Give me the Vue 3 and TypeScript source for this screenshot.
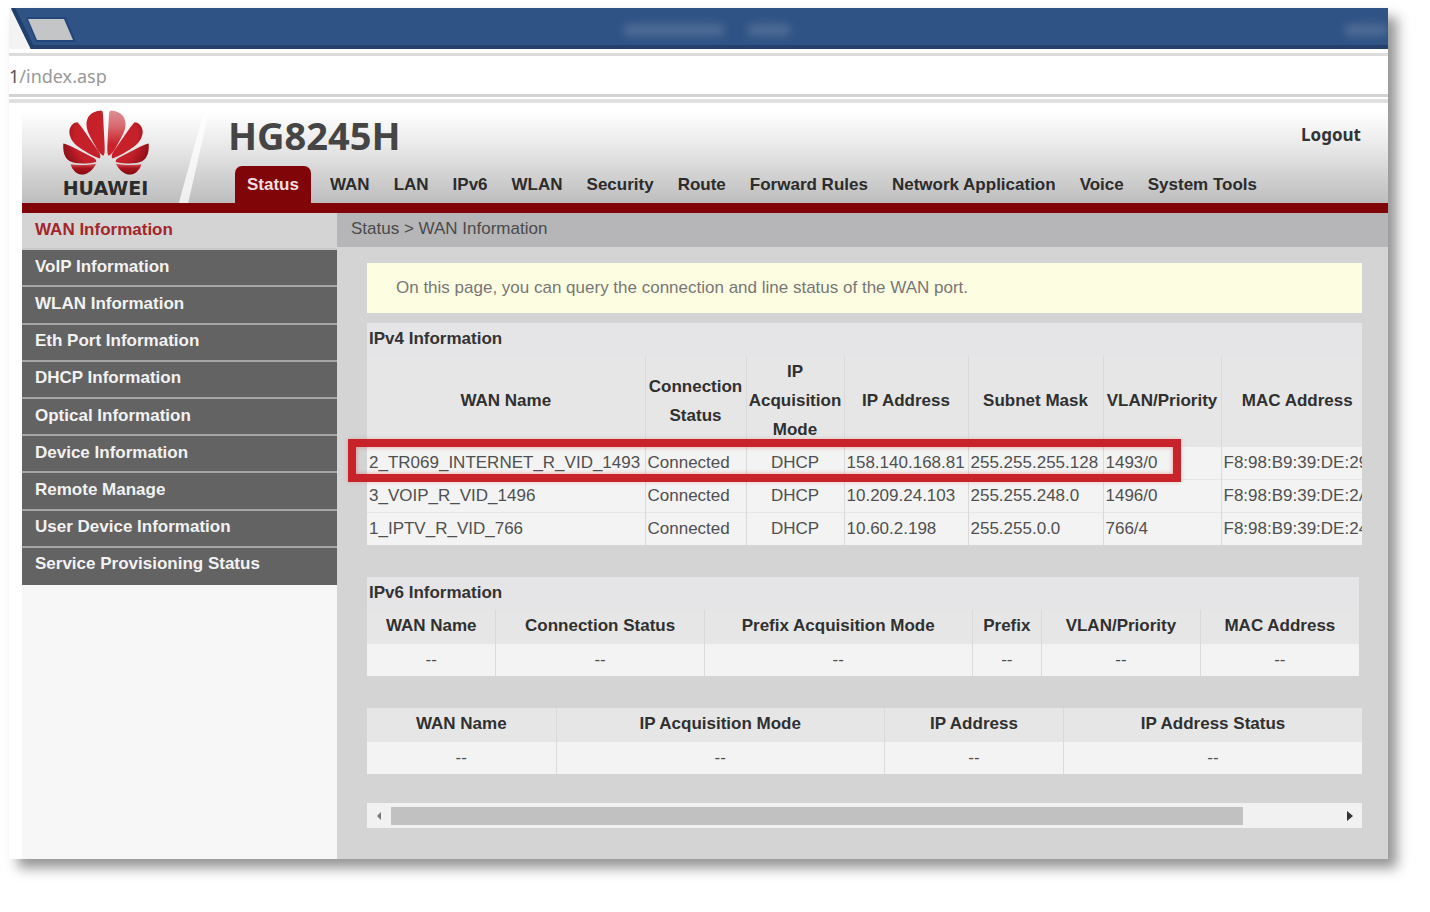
<script setup lang="ts">
import { ref } from 'vue'

interface WanRow {
  name: string
  status: string
  mode: string
  ip: string
  mask: string
  vlan: string
  mac: string
}

const navItems: string[] = [
  'Status', 'WAN', 'LAN', 'IPv6', 'WLAN', 'Security', 'Route',
  'Forward Rules', 'Network Application', 'Voice', 'System Tools',
]

const sideItems: string[] = [
  'WAN Information', 'VoIP Information', 'WLAN Information', 'Eth Port Information',
  'DHCP Information', 'Optical Information', 'Device Information', 'Remote Manage',
  'User Device Information', 'Service Provisioning Status',
]

const activeNav = ref('Status')
const activeSide = ref('WAN Information')
const path = ref('/index.asp')

const ipv4Heads: string[] = [
  'WAN Name', 'Connection Status', 'IP Acquisition Mode', 'IP Address',
  'Subnet Mask', 'VLAN/Priority', 'MAC Address',
]

const wanRows: WanRow[] = [
  { name: '2_TR069_INTERNET_R_VID_1493', status: 'Connected', mode: 'DHCP', ip: '158.140.168.81', mask: '255.255.255.128', vlan: '1493/0', mac: 'F8:98:B9:39:DE:29' },
  { name: '3_VOIP_R_VID_1496', status: 'Connected', mode: 'DHCP', ip: '10.209.24.103', mask: '255.255.248.0', vlan: '1496/0', mac: 'F8:98:B9:39:DE:2A' },
  { name: '1_IPTV_R_VID_766', status: 'Connected', mode: 'DHCP', ip: '10.60.2.198', mask: '255.255.0.0', vlan: '766/4', mac: 'F8:98:B9:39:DE:24' },
]

const ipv6Heads: string[] = [
  'WAN Name', 'Connection Status', 'Prefix Acquisition Mode', 'Prefix', 'VLAN/Priority', 'MAC Address',
]
const addressHeads: string[] = ['WAN Name', 'IP Acquisition Mode', 'IP Address', 'IP Address Status']
</script>

<template>
  <div class="stage">
    <div class="window">
      <div class="titlebar">
        <svg class="tab" viewBox="0 0 80 41" aria-hidden="true">
          <polygon points="0,0 2,0 22,41 0,41" fill="#f3f3f3" />
          <path d="M4 0L24 41" stroke="#223f6b" stroke-width="4" fill="none" />
          <polygon points="17,9 57,9 67,34 27,34" fill="#25467a" />
          <polygon points="19,11 55,11 64,32 28,32" fill="#c4c5c7" />
        </svg>
        <span class="smear smear-a"></span>
        <span class="smear smear-b"></span>
        <span class="smear smear-c"></span>
      </div>

      <div class="addressbar">
        <label for="url">1</label>
        <input id="url" v-model="path" type="text" spellcheck="false" />
      </div>

      <div class="page">
        <header class="header">
          <div class="brand">
            <svg class="slash" viewBox="0 0 40 100" preserveAspectRatio="none" aria-hidden="true">
              <polygon points="30,0 36,0 12,100 1,100" fill="#fff" opacity="0.75" />
            </svg>
            <svg class="flower" viewBox="186 326 266 202" aria-hidden="true">
              <defs>
                <radialGradient id="petal" gradientUnits="userSpaceOnUse" cx="319" cy="410" r="135">
                  <stop offset="0" stop-color="#c9222b" />
                  <stop offset="0.7" stop-color="#c4202a" />
                  <stop offset="1" stop-color="#8f1019" />
                </radialGradient>
                <linearGradient id="pale" x1="0" y1="0" x2="0" y2="1">
                  <stop offset="0" stop-color="#dd9195" />
                  <stop offset="0.35" stop-color="#d9686e" />
                  <stop offset="0.75" stop-color="#c9222b" />
                </linearGradient>
                <linearGradient id="low" x1="0" y1="0" x2="0" y2="1">
                  <stop offset="0" stop-color="#e0555b" />
                  <stop offset="0.4" stop-color="#a8141e" />
                  <stop offset="1" stop-color="#85080f" />
                </linearGradient>
              </defs>
              <g fill="url(#petal)">
                <path d="M311 467C304 465 294 452 286 436C272 411 259 390 260 370C261 350 272 332 305 330Q310 332 310 342L315 440Q316 462 311 467Z" />
                <path d="M300 475C280 469 248 450 230 436C212 421 206 402 209 388C212 376 221 366 233 366L246 382L299 458Q304 470 300 475Z" />
                <path d="M289 486C262 492 228 493 210 484C194 475 188 455 190 430C200 431 214 439 228 446L282 474Q292 480 289 486Z" />
                <path d="M338 475C358 469 390 450 408 436C426 421 432 402 429 388C426 376 417 366 405 366L392 382L339 458Q334 470 338 475Z" />
                <path d="M349 486C376 492 410 493 428 484C444 475 450 455 448 430C438 431 424 439 410 446L356 474Q346 480 349 486Z" />
              </g>
              <path d="M327 467C334 465 344 452 352 436C366 411 379 390 378 370C377 350 366 332 333 330Q328 332 328 342L323 440Q322 462 327 467Z" fill="url(#pale)" />
              <path d="M289 491C281 507 266 524 245 524C228 523 216 508 212 493C236 497 268 495 289 491Z" fill="url(#low)" />
              <path d="M349 491C357 507 372 524 393 524C410 523 422 508 426 493C402 497 370 495 349 491Z" fill="url(#low)" />
            </svg>
            <span class="brand-name">HUAWEI</span>
          </div>
          <div class="head-main">
            <div class="head-top">
              <h1>HG8245H</h1>
              <a href="#logout" class="logout">Logout</a>
            </div>
            <nav class="nav">
              <a
                v-for="item in navItems"
                :key="item"
                href="#"
                :class="{ active: item === activeNav }"
                @click.prevent="activeNav = item"
              >{{ item }}</a>
            </nav>
          </div>
        </header>

        <div class="columns">
          <aside class="side">
            <nav class="side-list">
              <a
                v-for="item in sideItems"
                :key="item"
                href="#"
                :class="{ active: item === activeSide }"
                @click.prevent="activeSide = item"
              >{{ item }}</a>
            </nav>
          </aside>

          <main class="main">
            <div class="crumb">Status &gt; WAN Information</div>
            <div class="content">
              <p class="notice">On this page, you can query the connection and line status of the WAN port.</p>

              <section class="block">
                <div class="clip">
                  <table class="wan">
                    <caption>IPv4 Information</caption>
                    <colgroup>
                      <col class="w-name" /><col class="w-status" /><col class="w-mode" /><col class="w-ip" />
                      <col class="w-mask" /><col class="w-vlan" /><col class="w-mac" />
                    </colgroup>
                    <thead>
                      <tr><th v-for="h in ipv4Heads" :key="h" scope="col">{{ h }}</th></tr>
                    </thead>
                    <tbody>
                      <tr v-for="r in wanRows" :key="r.name">
                        <td>{{ r.name }}</td>
                        <td>{{ r.status }}</td>
                        <td class="center">{{ r.mode }}</td>
                        <td>{{ r.ip }}</td>
                        <td>{{ r.mask }}</td>
                        <td>{{ r.vlan }}</td>
                        <td>{{ r.mac }}</td>
                      </tr>
                    </tbody>
                  </table>
                </div>
                <div class="marker"></div>
              </section>

              <section class="block">
                <table class="prefix">
                  <caption>IPv6 Information</caption>
                  <colgroup>
                    <col class="p-name" /><col class="p-status" /><col class="p-mode" />
                    <col class="p-prefix" /><col class="p-vlan" /><col class="p-mac" />
                  </colgroup>
                  <thead>
                    <tr><th v-for="h in ipv6Heads" :key="h" scope="col">{{ h }}</th></tr>
                  </thead>
                  <tbody>
                    <tr><td v-for="h in ipv6Heads" :key="h" class="center">--</td></tr>
                  </tbody>
                </table>
              </section>

              <section class="block">
                <table>
                  <colgroup>
                    <col class="a-name" /><col class="a-mode" /><col class="a-ip" /><col class="a-status" />
                  </colgroup>
                  <thead>
                    <tr><th v-for="h in addressHeads" :key="h" scope="col">{{ h }}</th></tr>
                  </thead>
                  <tbody>
                    <tr><td v-for="h in addressHeads" :key="h" class="center">--</td></tr>
                  </tbody>
                </table>
              </section>

              <div class="scroll">
                <button type="button" aria-label="Scroll left">
                  <svg viewBox="0 0 6 10"><path d="M5 1L1 5L5 9Z" fill="#777" /></svg>
                </button>
                <div class="track"><div class="thumb"></div></div>
                <button type="button" aria-label="Scroll right">
                  <svg viewBox="0 0 6 10"><path d="M0 0L6 5L0 10Z" fill="#333" /></svg>
                </button>
              </div>
            </div>
          </main>
        </div>
      </div>
    </div>
  </div>
</template>

<style>
body {
  background: #fff;
}
</style>

<style scoped>
.stage {
  box-sizing: border-box;
  min-height: 100vh;
  padding: 8px 42px 53px 9px;
  display: flex;
  overflow: hidden;
  font: 17px/20px "Liberation Sans", Arial, sans-serif;
  color: #505050;
}
.window {
  flex: 1;
  min-width: 0;
  display: flex;
  flex-direction: column;
  background: #fff;
  box-shadow: 9px 9px 12px rgba(0, 0, 0, 0.42);
}
a {
  color: inherit;
  text-decoration: none;
}

.titlebar {
  position: relative;
  height: 41px;
  background: linear-gradient(#2f5385 90%, #25406c 90%);
  overflow: hidden;
}
.tab {
  position: absolute;
  left: 0;
  top: 0;
  width: 80px;
  height: 41px;
}
.smear {
  position: absolute;
  top: 16px;
  height: 12px;
  background: #4f6c96;
  border-radius: 6px;
  filter: blur(4px);
}
.smear-a {
  left: 44.5%;
  width: 102px;
}
.smear-b {
  left: 53.5%;
  width: 44px;
}
.smear-c {
  right: 0;
  width: 44px;
}

.addressbar {
  display: flex;
  align-items: center;
  height: 38px;
  margin-top: 4px;
  border-top: 3px solid #dcdcdc;
  border-bottom: 3px solid #d3d3d3;
  font-family: "Noto Sans", "Open Sans", sans-serif;
  font-size: 18px;
}
.addressbar label {
  color: #555;
}
.addressbar input {
  flex: 1;
  min-width: 0;
  border: 0;
  padding: 2px 0 0;
  outline: 0;
  background: transparent;
  font: inherit;
  color: #999;
}
.addressbar label {
  padding-top: 2px;
}

.page {
  flex: 1;
  display: flex;
  flex-direction: column;
  margin-top: 2px;
  padding-left: 13px;
  border-top: 4px solid #e0e0e0;
}
.header {
  display: flex;
  height: 100px;
  border-bottom: 10px solid #7f0508;
  background: linear-gradient(#fff 8%, #eaeaea 42%, #d2d2d2 72%, #bdbdbd);
}
.brand {
  position: relative;
  width: 206px;
  display: flex;
  flex-direction: column;
  align-items: center;
  box-sizing: border-box;
  padding: 6px 39px 0 0;
}
.slash {
  position: absolute;
  right: 16px;
  top: 10px;
  width: 34px;
  height: 90px;
}
.flower {
  width: 88px;
  height: 67px;
}
.brand-name {
  margin-top: 1px;
  font: bold 19px/22px "DejaVu Sans", sans-serif;
  color: #2b2b2b;
}
.head-main {
  flex: 1;
  min-width: 0;
  display: flex;
  flex-direction: column;
  justify-content: space-between;
}
.head-top {
  display: flex;
  justify-content: space-between;
  align-items: center;
  padding: 8px 27px 0 0;
}
h1 {
  margin: 0;
  font: bold 38px/48px "Noto Sans", "Open Sans", sans-serif;
  color: #454545;
}
.logout {
  font: bold 17px/20px "Noto Sans", sans-serif;
  color: #333;
}
.nav {
  display: flex;
  gap: 24px;
  padding-left: 7px;
  font-weight: bold;
  color: #2c2c2c;
  white-space: nowrap;
}
.nav a {
  padding: 9px 0 8px;
}
.nav .active {
  margin-right: -5px;
  padding: 9px 12px 8px;
  border-radius: 7px 7px 0 0;
  background: #7f0508;
  color: #f6dede;
}

.columns {
  flex: 1;
  display: flex;
}
.side {
  width: 315px;
  flex: none;
  background: #f7f7f7;
}
.side-list {
  display: grid;
  grid-auto-rows: 1fr;
  min-height: 372px;
  font-weight: bold;
}
.side-list a {
  display: flex;
  align-items: center;
  padding: 0 0 2px 13px;
  border-bottom: 2px solid #a5a5a5;
  background: #636363;
  color: #f2f2f2;
}
.side-list a:last-child {
  border-bottom-color: #636363;
}
.side-list .active {
  background: #d4d4d4;
  border-bottom-color: #c9c9c9;
  color: #a3262b;
}

.main {
  flex: 1;
  min-width: 0;
  background: #d4d4d4;
}
.crumb {
  padding: 6px 14px 8px;
  background: #b6b6b8;
  color: #4a4a4a;
}
.content {
  padding: 16px 26px 31px 30px;
}
.notice {
  margin: 0 0 10px;
  padding: 15px 29px;
  background: #fdfde1;
  color: #777;
}
.block {
  position: relative;
  margin-bottom: 32px;
}
.block:last-of-type {
  margin-bottom: 29px;
}
.clip {
  overflow: hidden;
}
table {
  width: 100%;
  table-layout: fixed;
  border-collapse: collapse;
}
caption {
  box-sizing: border-box;
  height: 33px;
  padding: 6px 2px;
  background: #e5e5e7;
  text-align: left;
  font-weight: bold;
  color: #333;
}
th,
td {
  box-sizing: border-box;
  height: 33px;
  padding: 0 2px;
  border-left: 1px solid #dadada;
}
th:first-child,
td:first-child {
  border-left: 0;
}
th {
  background: #e6e6e6;
  color: #303030;
}
td {
  background: #f3f3f3;
  border-top: 1px solid #e6e6e6;
  text-align: left;
  white-space: nowrap;
}
.center {
  text-align: center;
}
.wan {
  width: 1006px;
}
.wan th {
  height: 90px;
  padding: 0;
  line-height: 29px;
}
.w-name { width: 278px; }
.w-status { width: 101px; }
.w-mode { width: 98px; }
.w-ip { width: 124px; }
.w-mask { width: 135px; }
.w-vlan { width: 118px; }
.w-mac { width: 152px; }

.prefix {
  width: calc(100% - 3px);
}
.p-name { width: 13%; }
.p-status { width: 21%; }
.p-mode { width: 27%; }
.p-prefix { width: 7%; }
.p-vlan { width: 16%; }
.p-mac { width: 16%; }

.a-name { width: 19%; }
.a-mode { width: 33%; }
.a-ip { width: 18%; }
.a-status { width: 30%; }

/* Highlight frame over the active internet connection */
.marker {
  position: absolute;
  left: -19px;
  top: 116px;
  width: 833px;
  height: 43px;
  box-sizing: border-box;
  border: 8px solid #c8222b;
  box-shadow: inset 0 0 4px rgba(220, 60, 60, 0.5), 0 0 4px rgba(220, 60, 60, 0.25);
}

.scroll {
  display: flex;
  align-items: center;
  height: 25px;
  background: #f1f1f1;
}
.scroll button {
  display: flex;
  align-items: center;
  justify-content: center;
  width: 24px;
  height: 25px;
  padding: 0;
  border: 0;
  background: transparent;
}
.scroll svg {
  width: 6px;
  height: 10px;
}
.track {
  flex: 1;
}
.thumb {
  width: 90%;
  height: 18px;
  background: #c1c1c1;
}
</style>
